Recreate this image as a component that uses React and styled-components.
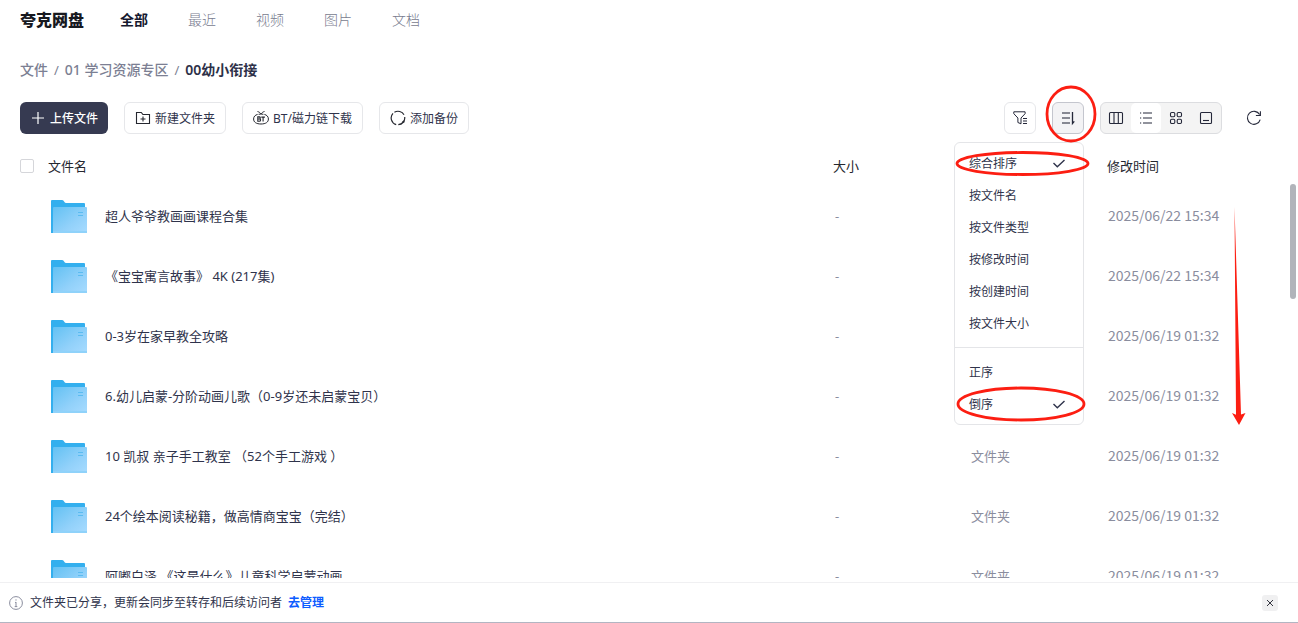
import React from "react";
import styled, { createGlobalStyle, css } from "styled-components";

const GlobalStyle = createGlobalStyle`
  *, *::before, *::after { box-sizing: border-box; }
  body {
    margin: 0;
    background: #fff;
    color: #2f334b;
    font-family: "Noto Sans", "Noto Sans CJK SC", sans-serif;
    font-size: 13px;
    font-weight: 400;
  }
  button, input { font: inherit; color: inherit; margin: 0; padding: 0; }
  button { cursor: pointer; }
  a { text-decoration: none; color: inherit; }
  svg { display: block; flex: none; }
`;

const Page = styled.div`
  height: 100vh;
  min-height: 320px;
  display: flex;
  flex-direction: column;
  overflow: hidden;
  border-bottom: 1px solid #b2b5c2;
`;

const Header = styled.header`
  display: flex;
  align-items: center;
  gap: 36px;
  height: 40px;
  padding: 0 20px;
  flex: none;
`;

const Logo = styled.h1`
  margin: 0;
  font-size: 16px;
  line-height: 24px;
  font-weight: 900;
  color: #17191f;
`;

const Tabs = styled.nav`
  display: flex;
  gap: 40px;
`;

const Tab = styled.a`
  font-size: 14px;
  line-height: 20px;
  font-weight: ${(p) => (p.$active ? 700 : 300)};
  color: ${(p) => (p.$active ? "#15182f" : "#787b8e")};
`;

const Breadcrumb = styled.nav`
  display: flex;
  align-items: center;
  gap: 6px;
  height: 20px;
  margin: 20px 20px 0;
  font-size: 14px;
  line-height: 20px;
  font-weight: 500;
  color: #7c7f93;
  flex: none;
`;

const Current = styled.span`
  font-weight: 600;
  color: #2d3048;
`;

const Slash = styled.span`
  font-size: 13px;
  font-weight: 400;
`;

const Toolbar = styled.div`
  display: flex;
  justify-content: space-between;
  margin: 22px 28px 0 20px;
  flex: none;
`;

const Group = styled.div`
  display: flex;
  align-items: center;
  gap: 16px;
`;

const ActionButton = styled.button`
  display: flex;
  align-items: center;
  gap: 4px;
  height: 32px;
  padding: 0 10px;
  border: 1px solid #e6e7ea;
  border-radius: 6px;
  background: #fff;
  font-size: 12px;
  line-height: 16px;
  white-space: nowrap;
  ${(p) =>
    p.$primary &&
    css`
      border: 0;
      background: #363a51;
      color: #fff;
      font-weight: 500;
    `}
`;

const Label = styled.span`
  padding-top: 2px;
`;

const IconButton = styled.button`
  display: grid;
  place-items: center;
  width: 32px;
  height: 32px;
  border: 1px solid ${(p) => (p.$plain ? "transparent" : p.$active ? "#c4c6ce" : "#e6e7ea")};
  border-radius: 6px;
  background: ${(p) => (p.$active ? "#f3f3f5" : "#fff")};
  color: #25283a;
`;

const ViewSwitch = styled.div`
  display: flex;
  height: 32px;
  border: 1px solid #dcdde0;
  border-radius: 6px;
  background: #f4f4f4;
`;

const ViewButton = styled.button`
  display: grid;
  place-items: center;
  width: 30px;
  height: 30px;
  border: 0;
  border-radius: 5px;
  background: ${(p) => (p.$active ? "#fff" : "transparent")};
  color: #25283a;
`;

const SortAnchor = styled.div`
  position: relative;
`;

const Menu = styled.div`
  position: absolute;
  z-index: 2;
  top: 40px;
  right: 0;
  width: 130px;
  padding: 4px 0;
  border: 1px solid #e4e5e8;
  border-radius: 6px;
  background: #fff;
`;

const MenuItem = styled.button`
  display: flex;
  align-items: center;
  justify-content: space-between;
  width: 100%;
  height: 32px;
  padding: 0 17px 0 14px;
  border: 0;
  background: transparent;
  font-size: 12px;
  line-height: 16px;
`;

const Divider = styled.hr`
  margin: 8px 0;
  border: 0;
  border-top: 1px solid #e4e5e8;
`;

const Marks = styled.svg`
  position: absolute;
  z-index: 3;
  top: -22px;
  left: -102px;
  pointer-events: none;
`;

const ListArea = styled.main`
  position: relative;
  flex: 1;
  min-height: 0;
  margin: 12px 0 4px;
  overflow: hidden;
`;

const ScrollThumb = styled.div`
  position: absolute;
  top: 38px;
  right: 2px;
  width: 6px;
  height: 115px;
  border-radius: 3px;
  background: #b1b4ba;
`;

const FileTable = styled.table`
  width: 100%;
  border-collapse: collapse;
  table-layout: fixed;
`;

const Th = styled.th`
  width: ${(p) => p.$width || "auto"};
  height: 40px;
  padding: 0;
  text-align: left;
  font-weight: 400;
  line-height: 20px;
  color: #25272f;
`;

const NameHead = styled.div`
  display: flex;
  align-items: center;
  gap: 14px;
  padding-left: 20px;
`;

const Checkbox = styled.input`
  appearance: none;
  width: 14px;
  height: 14px;
  border: 1px solid #d5d6da;
  border-radius: 2px;
  background: #fff;
  &:checked { background: #363a51; }
`;

const Td = styled.td`
  height: 60px;
  padding: 0 0 ${(p) => (p.$date ? "2px" : "0")} ${(p) => p.$indent || "0"};
  line-height: 20px;
  color: #8a8d9e;
  font-family: ${(p) => (p.$date ? '"Noto Sans CJK SC", sans-serif' : "inherit")};
  font-size: ${(p) => (p.$date ? "14px" : "13px")};
`;

const FileName = styled.a`
  display: flex;
  align-items: center;
  gap: 18px;
  padding-left: 51px;
  color: #2f334b;
  white-space: pre;
`;

const Notice = styled.footer`
  display: flex;
  align-items: center;
  height: 40px;
  padding: 0 20px 0 9px;
  border-top: 1px solid #f0f0f2;
  font-size: 12px;
  line-height: 16px;
  flex: none;
`;

const NoticeText = styled.span`
  margin: 0 6px 0 7px;
`;

const ManageLink = styled.a`
  font-weight: 700;
  color: #0d5cff;
`;

const CloseButton = styled.button`
  display: grid;
  place-items: center;
  width: 16px;
  height: 16px;
  margin-left: auto;
  border: 0;
  border-radius: 3px;
  background: #f0f0f1;
  color: #33353f;
`;

const Line = ({ size = 16, children, ...rest }) => (
  <svg width={size} height={size} viewBox={`0 0 ${size} ${size}`} fill="none" stroke="currentColor" strokeWidth="1" aria-hidden="true" {...rest}>
    {children}
  </svg>
);

const PlusIcon = () => (
  <Line strokeWidth="1.2"><path d="M8 2v12M2 8h12" /></Line>
);
const NewFolderIcon = () => (
  <Line stroke="#25272f" strokeWidth="1.1">
    <path d="M1.5 2.5h4.8l1.6 2h6.6v9h-13zM8 6.5v5M5.5 9h5" />
  </Line>
);
const BtIcon = () => (
  <Line stroke="#25272f">
    <path d="M4.6 4.4C2.2 5 .6 6.6.6 9c0 3.2 2.7 5 7.4 5s7.4-1.8 7.4-5c0-2.4-1.6-4-4-4.6M4.5 1.5C5.8 1.8 7 2.6 8 3.9c1-1.3 2.2-2.1 3.5-2.4M5.6 4.3c1.6-.4 3.2-.4 4.8 0" />
    <path d="M4.8 6.9v4.3h1.4c1.8 0 1.8-2.1.3-2.2 1.2-.2 1.1-2.1-.3-2.1zM4.8 9h1.8M8.3 7.1h3.6M10.1 7.1v4.4" strokeWidth="1.1" />
  </Line>
);
const BackupIcon = () => (
  <Line stroke="#25272f" strokeWidth="1.2">
    <path d="M6.2 14.6A6.8 6.8 0 0 1 3 3.4M4.4 2.3a6.8 6.8 0 0 1 9.6 2.5M14.7 7a6.8 6.8 0 0 1-6.4 7.7" />
    <path d="m12.1 11.9 1.7.1.4-1.7" />
  </Line>
);
const FilterIcon = () => (
  <Line>
    <path d="M1.8 1.8h11.3v1.9L9 8v5.8l-3.1-1.3V8L1.8 3.7z" />
    <path d="M11 8.5h4M11 11h4M11 13.5h4" strokeWidth="1.1" />
  </Line>
);
const SortIcon = () => (
  <Line>
    <path d="M2 3h8M2 8h8M2 13h8" strokeWidth="1.5" opacity=".7" />
    <path d="M12.5 2v11.5l1.8-2.2" strokeWidth="1.3" />
  </Line>
);
const ColumnsIcon = () => (
  <Line strokeWidth="1.1"><rect x="1.5" y="2.5" width="13" height="11" rx="1" /><path d="M6 2.5v11M10.3 2.5v11" /></Line>
);
const ListIcon = () => (
  <Line strokeWidth="1.1"><path d="M5 3h9M5 8h9M5 13h9M2 3h1.2M2 8h1.2M2 13h1.2" /></Line>
);
const GridIcon = () => (
  <Line strokeWidth="1.1">
    <rect x="2.5" y="2.5" width="4.3" height="4.3" rx="1.2" />
    <rect x="9.2" y="2.5" width="4.3" height="4.3" rx="1.2" />
    <rect x="2.5" y="9.2" width="4.3" height="4.3" rx="1.2" />
    <rect x="9.2" y="9.2" width="4.3" height="4.3" rx="1.2" />
  </Line>
);
const PreviewIcon = () => (
  <Line strokeWidth="1.1"><rect x="2.5" y="2.5" width="11" height="11" rx="1" /><path d="M5 10.5h6" /></Line>
);
const RefreshIcon = () => (
  <Line strokeWidth="1.1"><path d="M14.2 9.6A6.5 6.5 0 1 1 13.6 4.6M14.4 1.2v4.3h-4.5" /></Line>
);
const CheckIcon = () => (
  <Line size={14} strokeWidth="1.4"><path d="m1.5 7 3.8 3.8L12.5 4" /></Line>
);
const InfoIcon = () => (
  <Line size={14} stroke="#8a8d9e">
    <circle cx="7" cy="7" r="6.4" /><path d="M7 6v4.8M6 6.4h1M5.7 10.6h2.6M7 3.3v1.3" />
  </Line>
);
const CloseIcon = () => (
  <Line size={8} strokeWidth="1"><path d="m1 1 6 6M7 1 1 7" /></Line>
);

const FolderIcon = () => (
  <svg width="36" height="36" viewBox="0 -2 36 36" aria-hidden="true">
    <defs>
      <linearGradient id="folderFront" x1="0" y1="0" x2="1" y2="1">
        <stop offset="0" stopColor="#63c1f3" />
        <stop offset=".6" stopColor="#92d1fa" />
        <stop offset="1" stopColor="#a7dbff" />
      </linearGradient>
    </defs>
    <path d="M0 1q0-1 1-1h10q1 0 1.6.8l1 1.4q.5.8 1.4.8h18q1 0 1 1v29H0z" fill="#33afee" />
    <path d="M2 8q0-1 1-1h32q1 0 1 1v25H2z" fill="url(#folderFront)" />
    <path d="M2 31h34v2H2z" fill="#8fd2fa" />
    <path d="M27 12.5h5M27 15.5h5" stroke="#5bbcf1" />
  </svg>
);

const files = [
  { name: "超人爷爷教画画课程合集", date: "2025/06/22 15:34" },
  { name: "《宝宝寓言故事》 4K (217集)", date: "2025/06/22 15:34" },
  { name: "0-3岁在家早教全攻略", date: "2025/06/19 01:32" },
  { name: "6.幼儿启蒙-分阶动画儿歌（0-9岁还未启蒙宝贝）", date: "2025/06/19 01:32" },
  { name: "10 凯叔 亲子手工教室 （52个手工游戏 ）", type: "文件夹", date: "2025/06/19 01:32" },
  { name: "24个绘本阅读秘籍，做高情商宝宝（完结）", type: "文件夹", date: "2025/06/19 01:32" },
  { name: "阿嘟白泽 《这是什么》儿童科学启蒙动画", type: "文件夹", date: "2025/06/19 01:32" },
];

const tabs = ["全部", "最近", "视频", "图片", "文档"];
const sortFields = ["综合排序", "按文件名", "按文件类型", "按修改时间", "按创建时间", "按文件大小"];
const sortOrders = ["正序", "倒序"];
const views = [
  ["分栏", ColumnsIcon],
  ["列表", ListIcon],
  ["网格", GridIcon],
  ["预览", PreviewIcon],
];

const SortOption = ({ label, checked }) => (
  <MenuItem type="button" role="menuitemradio" aria-checked={checked}>
    <Label>{label}</Label>
    {checked && <CheckIcon />}
  </MenuItem>
);

export default function App() {
  return (
    <Page>
      <GlobalStyle />
      <Header>
        <Logo>夸克网盘</Logo>
        <Tabs>
          {tabs.map((t, i) => (
            <Tab key={t} href="#" $active={i === 0}>{t}</Tab>
          ))}
        </Tabs>
      </Header>

      <Breadcrumb>
        <a href="#">文件</a>
        <Slash>/</Slash>
        <a href="#">01 学习资源专区</a>
        <Slash>/</Slash>
        <Current>00幼小衔接</Current>
      </Breadcrumb>

      <Toolbar>
        <Group>
          <ActionButton type="button" $primary><PlusIcon /><Label>上传文件</Label></ActionButton>
          <ActionButton type="button"><NewFolderIcon /><Label>新建文件夹</Label></ActionButton>
          <ActionButton type="button"><BtIcon /><Label>BT/磁力链下载</Label></ActionButton>
          <ActionButton type="button"><BackupIcon /><Label>添加备份</Label></ActionButton>
        </Group>
        <Group>
          <IconButton type="button" aria-label="筛选"><FilterIcon /></IconButton>
          <SortAnchor>
            <IconButton type="button" aria-label="排序" $active><SortIcon /></IconButton>
            <Menu role="menu">
              {sortFields.map((s, i) => <SortOption key={s} label={s} checked={i === 0} />)}
              <Divider />
              {sortOrders.map((s, i) => <SortOption key={s} label={s} checked={i === 1} />)}
            </Menu>
            <Marks width="300" height="350" viewBox="950 80 300 350" fill="none" stroke="#fc1e12" strokeWidth="2.8" aria-hidden="true">
              <ellipse cx="1071" cy="114" rx="24" ry="27" />
              <ellipse cx="1022.5" cy="163.5" rx="65.5" ry="11" />
              <ellipse cx="1021" cy="404" rx="63" ry="16" />
              <path d="M1234.5 207 1241 414.5l4.5-1.5-6.5 12-7-12 4 1.8z" fill="#fc1e12" stroke="none" />
            </Marks>
          </SortAnchor>
          <ViewSwitch>
            {views.map(([label, Icon], i) => (
              <ViewButton key={label} type="button" aria-label={label} $active={i === 1}><Icon /></ViewButton>
            ))}
          </ViewSwitch>
          <IconButton type="button" aria-label="刷新" $plain><RefreshIcon /></IconButton>
        </Group>
      </Toolbar>

      <ListArea>
        <FileTable>
          <thead>
            <tr>
              <Th>
                <NameHead>
                  <Checkbox type="checkbox" aria-label="全选" />
                  文件名
                </NameHead>
              </Th>
              <Th $width="138px">大小</Th>
              <Th $width="136px" aria-label="类型" />
              <Th $width="191px">修改时间</Th>
            </tr>
          </thead>
          <tbody>
            {files.map(({ name, type, date }) => (
              <tr key={name}>
                <Td><FileName href="#"><FolderIcon />{name}</FileName></Td>
                <Td $indent="2px">-</Td>
                <Td>{type}</Td>
                <Td $date $indent="1px">{date}</Td>
              </tr>
            ))}
          </tbody>
        </FileTable>
        <ScrollThumb />
      </ListArea>

      <Notice>
        <InfoIcon />
        <NoticeText>文件夹已分享，更新会同步至转存和后续访问者</NoticeText>
        <ManageLink href="#">去管理</ManageLink>
        <CloseButton type="button" aria-label="关闭"><CloseIcon /></CloseButton>
      </Notice>
    </Page>
  );
}
